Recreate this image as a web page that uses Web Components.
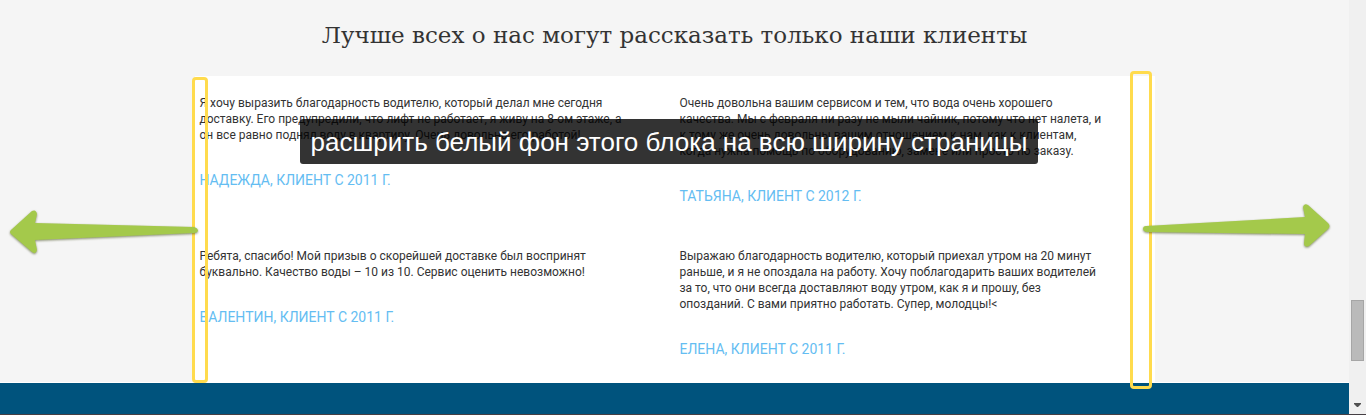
<!DOCTYPE html>
<html lang="ru">
<head>
<meta charset="utf-8">
<title>Отзывы клиентов</title>
<style>
body { margin: 0; background: #f5f5f5; font-family: Roboto, sans-serif; color: #333; }
</style>
</head>
<body>
<page-window>
  <review-section>
    <span slot="title">Лучше всех о нас могут рассказать только наши клиенты</span>
    <client-review author="Надежда, клиент с 2011 г.">Я хочу выразить благодарность водителю, который делал мне сегодня доставку. Его предупредили, что лифт не работает, я живу на 8-ом этаже, а он все равно поднял воду в квартиру. Очень довольна его работой!</client-review>
    <client-review author="Татьяна, клиент с 2012 г.">Очень довольна вашим сервисом и тем, что вода очень хорошего качества. Мы с февраля ни разу не мыли чайник, потому что нет налета, и к тому же очень довольны вашим отношением к нам, как к клиентам, когда нужна помощь по оборудованию, замене или просто по заказу.</client-review>
    <client-review author="Валентин, клиент с 2011 г.">Ребята, спасибо! Мой призыв о скорейшей доставке был воспринят буквально. Качество воды – 10 из 10. Сервис оценить невозможно!</client-review>
    <client-review author="Елена, клиент с 2011 г.">Выражаю благодарность водителю, который приехал утром на 20 минут раньше, и я не опоздала на работу. Хочу поблагодарить ваших водителей за то, что они всегда доставляют воду утром, как я и прошу, без опозданий. С вами приятно работать. Супер, молодцы!&lt;</client-review>
    <edit-notes slot="notes">расшрить белый фон этого блока на всю ширину страницы</edit-notes>
  </review-section>
  <scroll-rail slot="rail"></scroll-rail>
</page-window>
<script>
const define = (name, html, setup) => customElements.define(name, class extends HTMLElement {
  connectedCallback() {
    if (this.shadowRoot) return;
    this.attachShadow({ mode: 'open' }).innerHTML = html;
    if (setup) setup(this);
  }
});

define('page-window', `
<style>
:host { display: grid; grid-template-columns: minmax(0, 1fr) 17px; border-bottom: 1px solid #453f44; }
main { min-width: 0; }
footer { height: 31px; background: #00537d; border-top: 1px solid #fff; }
</style>
<main><slot></slot><footer></footer></main>
<slot name="rail"></slot>`);

define('review-section', `
<style>
:host { display: block; }
h2 { margin: 0; padding: 17px 0 23px; font: 400 23px/36px "Roboto Slab", "DejaVu Serif", serif; text-align: center; }
.panel { position: relative; box-sizing: border-box; max-width: 960px; margin: 0 auto; padding: 19px 51px 23px 5px; background: #fff;
  display: grid; grid-template-columns: 1fr 1fr; gap: 42px 56px; }
</style>
<section>
  <h2><slot name="title"></slot></h2>
  <div class="panel"><slot></slot><slot name="notes"></slot></div>
</section>`);

define('client-review', `
<style>
:host { display: block; }
blockquote, p { margin: 0; }
p { font-size: 12px; line-height: 16px; }
footer { margin-top: 27px; font-size: 14px; line-height: 20px; color: #64bdf2; text-transform: uppercase; }
</style>
<blockquote><p><slot></slot></p><footer></footer></blockquote>`,
el => { el.shadowRoot.querySelector('footer').textContent = el.getAttribute('author'); });

/* Hand-placed annotations lying over the panel. */
define('edit-notes', `
<style>
:host { position: absolute; inset: 0; pointer-events: none; }
.frame { position: absolute; box-sizing: border-box; border: 3px solid #ffdb4d; border-radius: 4px; }
.left { left: -3px; top: 1px; bottom: -1px; width: 16px; }
.right { right: 3px; top: -5px; bottom: -7px; width: 22px; }
.caption { position: absolute; left: 105px; top: 43px; box-sizing: border-box; height: 45px; padding: 0 11px; border-radius: 3px;
  background: rgba(0,0,0,.8); color: #fff; font: 26px/47px "Liberation Sans", Arial, sans-serif; white-space: nowrap; }
svg { position: absolute; overflow: visible; fill: #a4c94b; filter: drop-shadow(0 1px 1px rgba(60,70,20,.6)); }
.to-left { left: -185px; top: 134px; }
.to-right { right: -175px; top: 128px; }
</style>
<div class="frame left"></div>
<div class="frame right"></div>
<svg class="to-left" width="188" height="44" viewBox="0 0 188 44" aria-hidden="true"><path d="M1 20 22 1Q26-1 27 4L25 13 184 17Q188 18 188 21 187 23 184 23L25 30 27 40Q26 45 22 42L1 24Q-1 22 1 20Z"/></svg>
<svg class="to-right" width="187" height="44" viewBox="0 0 187 44" aria-hidden="true"><path d="M3 22 162 13 160 3Q161-1 165 1L185 19Q188 22 185 25L166 42Q161 44 161 39L162 30 3 28Q0 27 0 25 0 22 3 22Z"/></svg>
<div class="caption"><slot></slot></div>`);

define('scroll-rail', `
<style>
:host { display: flex; flex-direction: column; align-items: center; justify-content: flex-end; background: #f0f0f0; }
.thumb { box-sizing: border-box; width: 13px; height: 61px; margin-bottom: 42px; background: #bababa; border: 1px solid #a6a6a6; }
svg { display: block; margin-bottom: 7px; fill: #505050; }
</style>
<div class="thumb"></div>
<svg width="7" height="4" viewBox="0 0 7 4" aria-hidden="true"><path d="M0 0H7V1L4 4H3L0 1Z"/></svg>`);
</script>
</body>
</html>
